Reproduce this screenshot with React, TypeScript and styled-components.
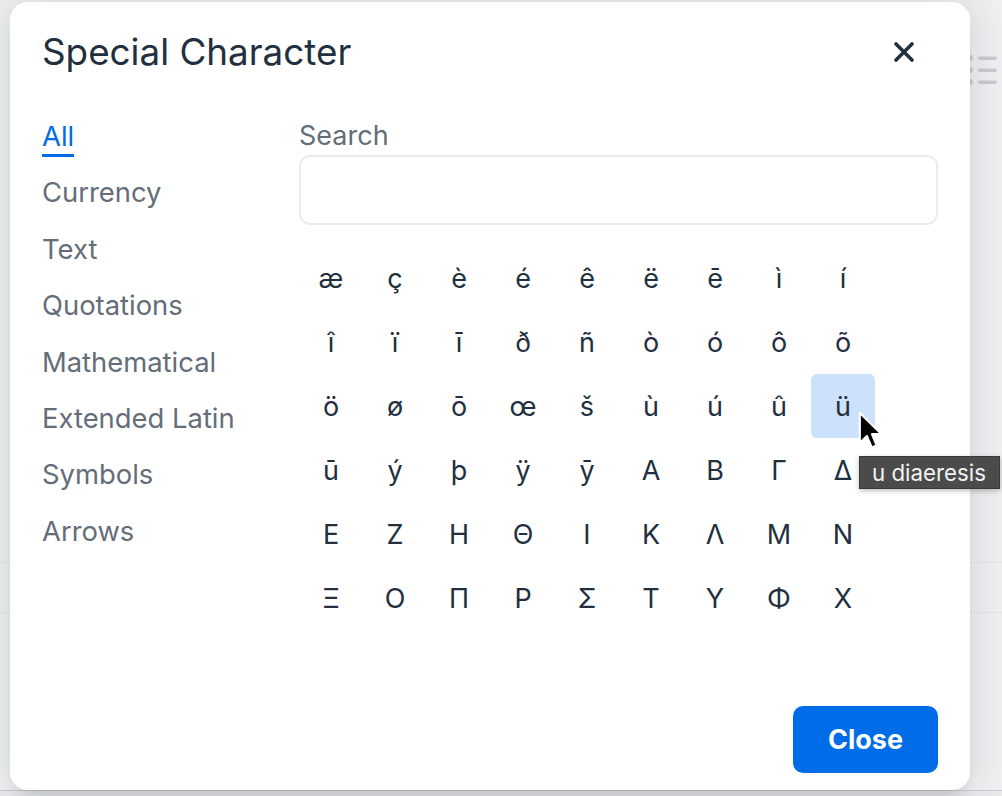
import React from "react";
import styled, { createGlobalStyle } from "styled-components";

const GlobalStyle = createGlobalStyle`
  html, body {
    margin: 0;
    padding: 0;
    background: #eef0f1;
    font-family: Inter, "Noto Sans", "Liberation Sans", sans-serif;
  }
  * { box-sizing: border-box; }
`;

const Page = styled.div`
  position: relative;
  width: 1002px;
  height: 796px;
  overflow: hidden;
  background: #eef0f1;
  display: flex;
  flex-direction: column;
`;

const BackToolbar = styled.div`
  height: 140px;
  display: flex;
  justify-content: flex-end;
  align-items: center;
  padding: 0 5px 0 0;
`;

const BackRows = styled.div`
  flex: 1;
  display: flex;
  flex-direction: column;
  padding-top: 373px;
`;

const BackRow = styled.div<{ $h: number }>`
  height: ${(p) => p.$h}px;
  border-bottom: 1px solid #e3e5e7;
`;

const BackFooter = styled.div`
  margin-top: auto;
  height: 6px;
  border-top: 1px solid #cbcdd0;
  background: #e8e9eb;
`;

const Dialog = styled.div`
  position: absolute;
  left: 10px;
  top: 2px;
  width: 960px;
  height: 788px;
  background: #ffffff;
  border-radius: 18px;
  box-shadow: 0 16px 16px -10px rgba(34, 47, 62, 0.15), 0 0 40px 1px rgba(34, 47, 62, 0.15);
  display: flex;
  flex-direction: column;
  color: #222f3e;
`;

const Header = styled.div`
  height: 100px;
  padding: 0 32px;
  display: flex;
  align-items: center;
  justify-content: space-between;
`;

const Title = styled.h1`
  margin: 0;
  font-size: 36.8px;
  font-weight: 400;
  line-height: 1.2;
  color: #222f3e;
`;

const IconButton = styled.button`
  width: 42px;
  height: 42px;
  margin-right: 13px;
  padding: 0;
  border: 0;
  background: transparent;
  display: flex;
  align-items: center;
  justify-content: center;
  color: #222f3e;
`;

const Body = styled.div`
  display: flex;
  padding: 16px 32px 0 32px;
`;

const Nav = styled.nav`
  width: 257px;
  flex: none;
  display: flex;
  flex-direction: column;
  align-items: flex-start;
  gap: 17.4px;
`;

const Tab = styled.div<{ $active?: boolean }>`
  font-size: 27.4px;
  line-height: 36px;
  color: ${(p) => (p.$active ? "#006ce7" : "#646d78")};
  border-bottom: 3px solid ${(p) => (p.$active ? "#006ce7" : "transparent")};
`;

const Content = styled.div`
  flex: 1;
  display: flex;
  flex-direction: column;
`;

const Label = styled.label`
  font-size: 27px;
  line-height: 36px;
  color: #646d78;
`;

const SearchInput = styled.input`
  margin-top: 1px;
  height: 70px;
  width: 100%;
  border: 2px solid #ececec;
  border-radius: 11px;
  background: #fff;
  outline: none;
  font: inherit;
  font-size: 27px;
  padding: 0 16px;
`;

const GridViewport = styled.div`
  margin-top: 21px;
  height: 406px;
  overflow: hidden;
`;

const CharGrid = styled.div`
  display: grid;
  grid-template-columns: repeat(9, 64px);
  grid-auto-rows: 64px;
`;

const CharCell = styled.div<{ $hover?: boolean }>`
  display: flex;
  align-items: center;
  justify-content: center;
  font-size: 27px;
  color: #222f3e;
  border-radius: 6px;
  background: ${(p) => (p.$hover ? "#cce2fa" : "transparent")};
`;

const Footer = styled.div`
  margin-top: auto;
  display: flex;
  justify-content: flex-end;
  padding: 0 32px 17px 32px;
`;

const PrimaryButton = styled.button`
  width: 145px;
  height: 67px;
  border: 0;
  border-radius: 10px;
  background: #006ce7;
  color: #fff;
  font-family: inherit;
  font-size: 27px;
  font-weight: 700;
`;

const Tooltip = styled.div`
  position: absolute;
  left: 859px;
  top: 456px;
  height: 33px;
  padding: 0 13px 0 12px;
  display: flex;
  align-items: center;
  background: #4b4b4b;
  border: 1px solid #393939;
  box-shadow: 0 2px 5px rgba(0, 0, 0, 0.25);
  color: #f2f2f2;
  font-size: 22.3px;
  white-space: nowrap;
`;

const Cursor = styled.svg`
  position: absolute;
  left: 858px;
  top: 411px;
`;

const chars: string[] = [
  "æ", "ç", "è", "é", "ê", "ë", "ē", "ì", "í",
  "î", "ï", "ī", "ð", "ñ", "ò", "ó", "ô", "õ",
  "ö", "ø", "ō", "œ", "š", "ù", "ú", "û", "ü",
  "ū", "ý", "þ", "ÿ", "ȳ", "Α", "Β", "Γ", "Δ",
  "Ε", "Ζ", "Η", "Θ", "Ι", "Κ", "Λ", "Μ", "Ν",
  "Ξ", "Ο", "Π", "Ρ", "Σ", "Τ", "Υ", "Φ", "Χ",
  "Ψ", "Ω", "α", "β", "γ", "δ", "ε", "ζ", "η",
  "θ", "ι", "κ", "λ", "μ", "ν", "ξ", "ο", "π",
];

const categories = [
  "All",
  "Currency",
  "Text",
  "Quotations",
  "Mathematical",
  "Extended Latin",
  "Symbols",
  "Arrows",
];

const ListIcon = () => (
  <svg width="30" height="30" viewBox="0 0 30 30" fill="#c9ccd0">
    <circle cx="3" cy="3" r="3" />
    <circle cx="3" cy="15" r="3" />
    <circle cx="3" cy="27" r="3" />
    <rect x="11" y="1.5" width="19" height="3.5" rx="1.75" />
    <rect x="11" y="13.5" width="19" height="3.5" rx="1.75" />
    <rect x="11" y="25.5" width="19" height="3.5" rx="1.75" />
  </svg>
);

export default function App() {
  return (
    <>
      <GlobalStyle />
      <Page>
        <BackToolbar>
          <ListIcon />
        </BackToolbar>
        <BackRows>
          <BackRow $h={50} />
          <BackRow $h={50} />
        </BackRows>
        <BackFooter />

        <Dialog role="dialog" aria-label="Special Character">
          <Header>
            <Title>Special Character</Title>
            <IconButton aria-label="Close">
              <svg width="42" height="42" viewBox="0 0 24 24" fill="currentColor">
                <path d="M17.3 8.2 13.4 12l3.9 3.8a1 1 0 0 1-1.5 1.5L12 13.4l-3.8 3.9a1 1 0 0 1-1.5-1.5l3.9-3.8-3.9-3.8a1 1 0 0 1 1.5-1.5l3.8 3.9 3.8-3.9a1 1 0 0 1 1.5 1.5z" />
              </svg>
            </IconButton>
          </Header>
          <Body>
            <Nav>
              {categories.map((c, i) => (
                <Tab key={c} $active={i === 0}>
                  {c}
                </Tab>
              ))}
            </Nav>
            <Content>
              <Label>Search</Label>
              <SearchInput />
              <GridViewport>
                <CharGrid>
                  {chars.map((ch, i) => (
                    <CharCell key={i} $hover={ch === "ü"}>
                      {ch}
                    </CharCell>
                  ))}
                </CharGrid>
              </GridViewport>
            </Content>
          </Body>
          <Footer>
            <PrimaryButton>Close</PrimaryButton>
          </Footer>
        </Dialog>

        <Tooltip>u diaeresis</Tooltip>
        <Cursor width="26" height="41" viewBox="0 0 14 22">
          <path
            d="M1 1 L1 17 L4.8 13.4 L7.4 19.6 L10 18.5 L7.5 12.4 L12.6 12.4 Z"
            fill="#000"
            stroke="#fff"
            strokeWidth="1.1"
            strokeLinejoin="round"
          />
        </Cursor>
      </Page>
    </>
  );
}
